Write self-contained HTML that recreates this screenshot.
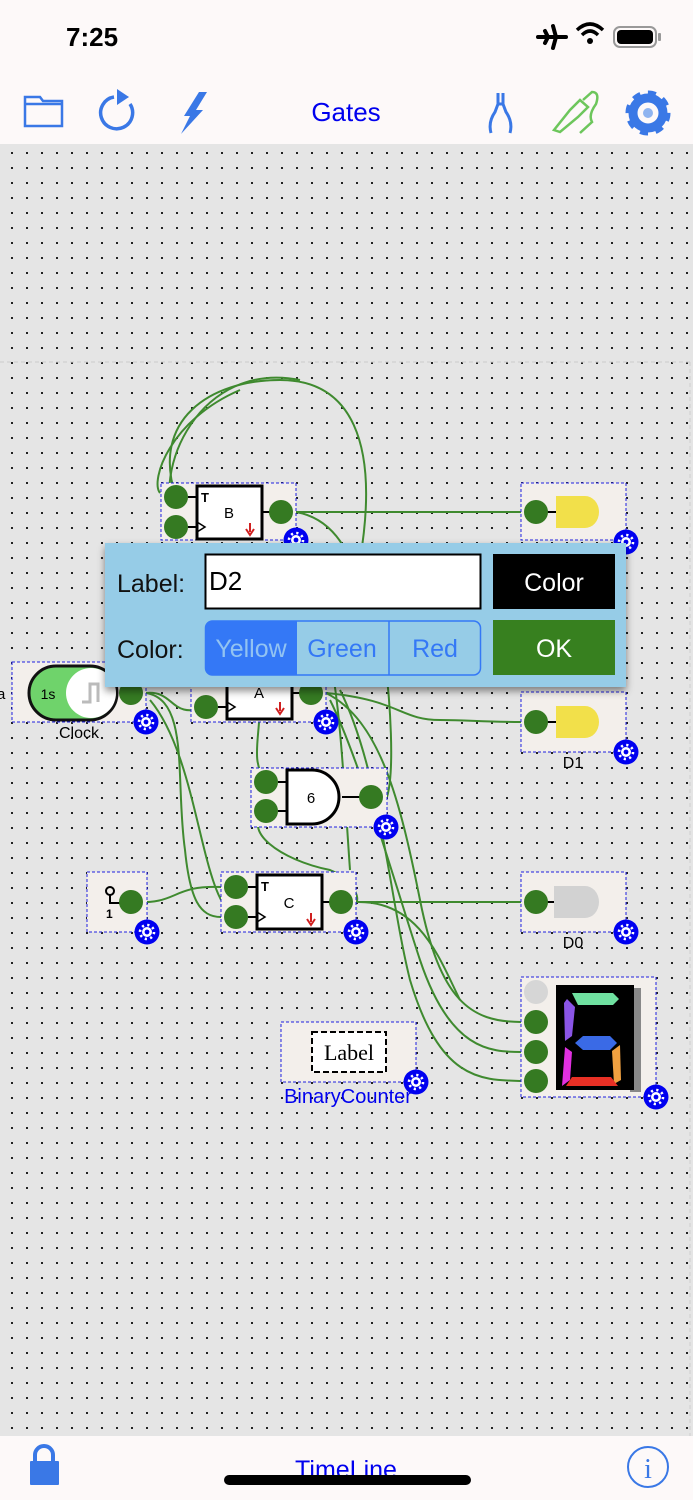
<!DOCTYPE html>
<html><head><meta charset="utf-8"><style>
html,body{margin:0;padding:0;width:693px;height:1500px;overflow:hidden;background:#fdf9f9;font-family:"Liberation Sans",sans-serif}
svg{position:absolute;left:0;top:0}
</style></head><body>
<svg width="693" height="1500" viewBox="0 0 693 1500" xmlns="http://www.w3.org/2000/svg" font-family="Liberation Sans, sans-serif">
<defs>
<pattern id="dots" x="4.5" y="145.5" width="15" height="15" patternUnits="userSpaceOnUse">
<rect x="6.5" y="6.5" width="2" height="2" fill="#222"/>
</pattern>
<g id="gear">
<circle r="12.5" fill="#0000f0"/>
<circle r="7" fill="none" stroke="#fff" stroke-width="2.6" stroke-dasharray="2.2 3.3"/>
<circle r="5" fill="#fff"/>
<circle r="2.4" fill="#0000f0"/>
</g>
<filter id="sh" x="-10%" y="-10%" width="120%" height="130%"><feDropShadow dx="0" dy="4" stdDeviation="4" flood-opacity="0.45"/></filter>
</defs>
<rect x="0" y="0" width="693" height="144" fill="#fdf9f9"/>
<text x="66" y="46" font-size="26" font-weight="bold" fill="#000">7:25</text>
<path d="M538 37 L566 37 M553 26 L556 37 L553 48 M545 31 L548 37 L545 43" stroke="#000" stroke-width="4" fill="none" stroke-linecap="round"/>
<path d="M577 30 Q590 18 603 30" stroke="#000" stroke-width="3.5" fill="none"/>
<path d="M582 35 Q590 27 598 35" stroke="#000" stroke-width="3.5" fill="none"/>
<circle cx="590" cy="41" r="3" fill="#000"/>
<rect x="614" y="27" width="42" height="20" rx="6" fill="none" stroke="#999" stroke-width="2"/>
<rect x="617" y="30" width="36" height="14" rx="4" fill="#000"/>
<rect x="658" y="33" width="3" height="8" rx="1" fill="#999"/>
<path d="M25 97 L40 97 L43 101 L62 101 L62 126 L25 126 Z M25 104 L62 104" fill="none" stroke="#3a78e6" stroke-width="2.5"/>
<path d="M114 97 A16 16 0 1 0 130 104" fill="none" stroke="#3a78e6" stroke-width="3.5"/>
<path d="M117 89 L129 97 L117 105 Z" fill="#3a78e6"/>
<path d="M199 92 L207 92 L196 110 L203 110 L181 134 L190 116 L184 116 Z" fill="#3a78e6"/>
<text x="346" y="121" font-size="26" fill="#0000ee" text-anchor="middle">Gates</text>
<path d="M498 93 L498 104 L495 112 Q488 122 491 133 M503 93 L503 104 L506 112 Q513 122 510 133 M497 104 L504 104" stroke="#3a78e6" stroke-width="3" fill="none"/>
<path d="M554 130 L570 110 L580 100 L588 107 L578 117 L560 132 Z M583 100 L592 92 Q600 92 596 104 Q588 115 592 122 L580 133" stroke="#6dc65c" stroke-width="2.5" fill="none"/>
<g transform="translate(648,113)"><circle r="18" fill="none" stroke="#3a78e6" stroke-width="9" stroke-dasharray="7.2 6.9"/><circle r="15" fill="none" stroke="#3a78e6" stroke-width="9"/><circle r="5" fill="#8fb4f0"/></g>
<rect x="0" y="144" width="693" height="1292" fill="#e5e5e5"/>
<rect x="0" y="144" width="693" height="1292" fill="url(#dots)"/>
<line x1="0" y1="362" x2="693" y2="362" stroke="#ccc" stroke-width="1" stroke-dasharray="4 3"/>
<line x1="690" y1="362" x2="690" y2="1436" stroke="#d0d0d0" stroke-width="1" stroke-dasharray="4 3"/>
<g fill="none" stroke="#3f8a2f" stroke-width="2">
<path d="M176 497 C150 420 210 380 280 380 C350 380 380 440 360 560"/>
<path d="M296 512 L521 512"/>
<path d="M296 512 C340 520 350 560 370 600"/>
<path d="M176 527 C150 470 200 360 300 380"/>
<path d="M160 493 C150 480 170 420 240 390"/>
<path d="M146 693 C175 690 170 720 206 707"/>
<path d="M146 693 C190 700 175 780 185 850 C190 900 200 917 221 917"/>
<path d="M150 700 C200 760 200 900 236 917"/>
<path d="M131 902 C180 905 170 885 221 887"/>
<path d="M326 693 C400 700 400 720 440 720 C470 720 480 722 521 722"/>
<path d="M326 693 C380 720 400 800 420 900 C440 1000 470 1022 521 1022"/>
<path d="M330 700 C360 760 400 900 420 960 C450 1050 490 1052 521 1052"/>
<path d="M340 690 C380 770 390 900 410 980 C440 1080 480 1080 521 1081"/>
<path d="M356 902 L521 902"/>
<path d="M356 902 C420 900 440 960 460 1000"/>
<path d="M266 811 C240 830 280 860 330 870 C355 880 360 900 356 902"/>
<path d="M387 797 C395 770 390 700 385 660"/>
<path d="M350 870 C345 800 340 700 330 660"/>
<path d="M266 782 C250 760 260 740 260 700"/>
</g>
<g fill="#f3efeb" stroke="#2020e0" stroke-width="1" stroke-dasharray="3 2">
<rect x="161" y="483" width="135" height="57"/>
<rect x="521" y="483" width="105" height="57"/>
<rect x="12" y="662" width="134" height="60"/>
<rect x="191" y="662" width="135" height="60"/>
<rect x="521" y="692" width="105" height="60"/>
<rect x="251" y="768" width="136" height="59"/>
<rect x="87" y="872" width="60" height="60"/>
<rect x="221" y="872" width="135" height="60"/>
<rect x="521" y="872" width="105" height="60"/>
<rect x="281" y="1022" width="135" height="60"/>
<rect x="521" y="977" width="135" height="120"/>
</g>
<g stroke="#000" stroke-width="2">
<line x1="188" y1="497" x2="197" y2="497"/><line x1="188" y1="527" x2="197" y2="527"/><line x1="262" y1="512" x2="270" y2="512"/>
<line x1="218" y1="707" x2="227" y2="707"/><line x1="292" y1="693" x2="300" y2="693"/>
<line x1="248" y1="887" x2="257" y2="887"/><line x1="248" y1="917" x2="257" y2="917"/><line x1="322" y1="902" x2="330" y2="902"/>
<line x1="278" y1="782" x2="287" y2="782"/><line x1="278" y1="811" x2="287" y2="811"/><line x1="342" y1="797" x2="360" y2="797"/>
<line x1="546" y1="512" x2="556" y2="512"/><line x1="546" y1="722" x2="556" y2="722"/><line x1="546" y1="902" x2="556" y2="902"/>
</g>
<rect x="197" y="486" width="65" height="53" fill="#fff" stroke="#000" stroke-width="3"/>
<text x="201" y="502" font-size="13" font-weight="bold">T</text><text x="229" y="518" font-size="15" text-anchor="middle">B</text>
<path d="M197 522 L205 527 L197 532" fill="none" stroke="#000" stroke-width="1.5"/>
<path d="M250 523 L250 532 M246 529 L250 535 L254 529" stroke="#d02020" stroke-width="2" fill="none"/>
<rect x="227" y="670" width="65" height="49" fill="#fff" stroke="#000" stroke-width="3"/>
<text x="259" y="698" font-size="15" text-anchor="middle">A</text>
<path d="M227 702 L235 707 L227 712" fill="none" stroke="#000" stroke-width="1.5"/>
<path d="M280 702 L280 711 M276 708 L280 714 L284 708" stroke="#d02020" stroke-width="2" fill="none"/>
<rect x="257" y="875" width="65" height="54" fill="#fff" stroke="#000" stroke-width="3"/>
<text x="261" y="891" font-size="13" font-weight="bold">T</text><text x="289" y="908" font-size="15" text-anchor="middle">C</text>
<path d="M257 912 L265 917 L257 922" fill="none" stroke="#000" stroke-width="1.5"/>
<path d="M311 913 L311 922 M307 919 L311 925 L315 919" stroke="#d02020" stroke-width="2" fill="none"/>
<path d="M287 770 L312 770 A27 27 0 0 1 312 824 L287 824 Z" fill="#fff" stroke="#000" stroke-width="3"/>
<text x="311" y="803" font-size="15" text-anchor="middle">6</text>
<path d="M556 496 L585 496 A14 16 0 0 1 585 528 L556 528 Z" fill="#f2e04a"/>
<path d="M556 706 L585 706 A14 16 0 0 1 585 738 L556 738 Z" fill="#f2e04a"/>
<path d="M554 886 L585 886 A14 16 0 0 1 585 918 L554 918 Z" fill="#d2d2d2"/>
<circle cx="110" cy="891" r="4" fill="none" stroke="#000" stroke-width="2"/>
<path d="M110 895 L110 903 L120 903" stroke="#000" stroke-width="2" fill="none"/>
<text x="106" y="918" font-size="12" font-weight="bold">1</text>
<rect x="29" y="666" width="88" height="54" rx="27" fill="#6fd36b" stroke="#111" stroke-width="3"/>
<circle cx="91" cy="693" r="25" fill="#fff"/>
<path d="M82 702 L90 702 L90 684 L98 684 L98 702" fill="none" stroke="#bbb" stroke-width="3"/>
<text x="48" y="699" font-size="14" text-anchor="middle">1s</text>
<text x="79" y="738" font-size="16" text-anchor="middle">Clock</text>
<text x="-3" y="699" font-size="15">a</text>
<rect x="312" y="1032" width="74" height="40" fill="#fff" stroke="#000" stroke-width="2" stroke-dasharray="6 3"/>
<text x="349" y="1060" font-size="22" font-family="Liberation Serif, serif" text-anchor="middle">Label</text>
<text x="348" y="1103" font-size="20" fill="#0000ee" text-anchor="middle">BinaryCounter</text>
<rect x="630" y="988" width="11" height="104" fill="#888"/>
<rect x="556" y="985" width="78" height="105" fill="#000"/>
<path d="M572 993 L613 993 L619 999 L613 1005 L578 1005 Z" fill="#6fe0a0"/>
<path d="M567 999 L575 1007 L572 1036 L565 1041 L564 1003 Z" fill="#8a55e6"/>
<path d="M575 1043 L583 1036 L610 1036 L617 1043 L610 1050 L583 1050 Z" fill="#3a6ae6"/>
<path d="M565 1047 L572 1052 L570 1080 L562 1086 Z" fill="#e030e0"/>
<path d="M612 1051 L620 1045 L621 1080 L614 1084 Z" fill="#f0a040"/>
<path d="M572 1077 L611 1077 L618 1086 L566 1086 Z" fill="#e83025"/>
<text x="573" y="768" font-size="16" text-anchor="middle">D1</text>
<text x="573" y="948" font-size="16" text-anchor="middle">D0</text>
<g fill="#357a22">
<circle cx="176" cy="497" r="12"/><circle cx="176" cy="527" r="12"/><circle cx="281" cy="512" r="12"/>
<circle cx="536" cy="512" r="12"/><circle cx="536" cy="722" r="12"/><circle cx="536" cy="902" r="12"/>
<circle cx="131" cy="693" r="12"/><circle cx="206" cy="707" r="12"/><circle cx="311" cy="693" r="12"/>
<circle cx="266" cy="782" r="12"/><circle cx="266" cy="811" r="12"/><circle cx="371" cy="797" r="12"/>
<circle cx="131" cy="902" r="12"/><circle cx="236" cy="887" r="12"/><circle cx="236" cy="917" r="12"/><circle cx="341" cy="902" r="12"/>
<circle cx="536" cy="1022" r="12"/><circle cx="536" cy="1052" r="12"/><circle cx="536" cy="1081" r="12"/>
</g>
<circle cx="536" cy="992" r="12" fill="#d6d6d6"/>
<use href="#gear" x="296" y="540"/><use href="#gear" x="626" y="542"/><use href="#gear" x="146" y="722"/>
<use href="#gear" x="326" y="722"/><use href="#gear" x="626" y="752"/><use href="#gear" x="386" y="827"/>
<use href="#gear" x="147" y="932"/><use href="#gear" x="356" y="932"/><use href="#gear" x="626" y="932"/>
<use href="#gear" x="416" y="1082"/><use href="#gear" x="656" y="1097"/>
<rect x="105" y="543" width="521" height="144" fill="#96cce7" filter="url(#sh)"/>
<text x="117" y="592" font-size="25" fill="#111">Label:</text>
<text x="117" y="658" font-size="25" fill="#111">Color:</text>
<rect x="205.5" y="554.5" width="275" height="54" fill="#fff" stroke="#000" stroke-width="2"/>
<text x="209" y="590" font-size="26" fill="#000">D2</text>
<rect x="493" y="554" width="122" height="55" fill="#000"/>
<text x="554" y="591" font-size="25" fill="#fff" text-anchor="middle">Color</text>
<rect x="493" y="620" width="122" height="55" fill="#37801f"/>
<text x="554" y="657" font-size="25" fill="#fff" text-anchor="middle">OK</text>
<rect x="205.5" y="621" width="275" height="54" rx="7" fill="#96cce7" stroke="#3478f6" stroke-width="1.5"/>
<path d="M212.5 621 L297 621 L297 675 L212.5 675 Q205.5 675 205.5 668 L205.5 628 Q205.5 621 212.5 621 Z" fill="#3478f6"/>
<line x1="389" y1="621" x2="389" y2="675" stroke="#3478f6" stroke-width="1.5"/>
<text x="251" y="657" font-size="25" fill="#92c3f2" text-anchor="middle">Yellow</text>
<text x="342" y="657" font-size="25" fill="#3478f6" text-anchor="middle">Green</text>
<text x="435" y="657" font-size="25" fill="#3478f6" text-anchor="middle">Red</text>
<rect x="0" y="1436" width="693" height="64" fill="#fdf9f9"/>
<path d="M35 1462 L35 1455 A9 9 0 0 1 53 1455 L53 1462" fill="none" stroke="#3a78e6" stroke-width="4"/>
<rect x="30" y="1461" width="29" height="24" rx="1" fill="#3a78e6"/>
<text x="346" y="1478" font-size="25" fill="#0000ee" text-anchor="middle">TimeLine</text>
<rect x="224" y="1475" width="247" height="10" rx="5" fill="#000"/>
<circle cx="648" cy="1467" r="20" fill="none" stroke="#3a78e6" stroke-width="2"/>
<text x="648" y="1478" font-size="28" font-family="Liberation Serif, serif" fill="#3a78e6" text-anchor="middle">i</text>
</svg>
</body></html>
